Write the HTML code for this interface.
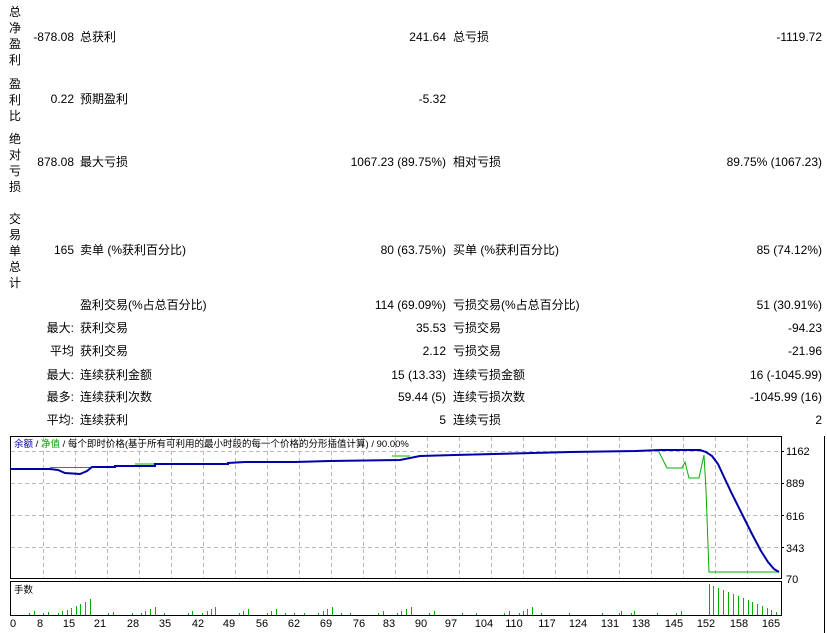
<!DOCTYPE html>
<html><head><meta charset="utf-8"><style>
body{margin:0;width:827px;height:633px;background:#fff;overflow:hidden;font-family:"Liberation Sans","Noto Sans CJK SC",sans-serif;font-size:12px;color:#000;position:relative}
.t{position:absolute;white-space:nowrap;line-height:14px}
.v{position:absolute;left:8px;width:14px;line-height:16px;font-size:12px;text-align:center}
.r{text-align:right}
</style></head><body>
<div class="v" style="top:4px">总<br>净<br>盈<br>利</div>
<div class="v" style="top:76px">盈<br>利<br>比</div>
<div class="v" style="top:131px">绝<br>对<br>亏<br>损</div>
<div class="v" style="top:211px">交<br>易<br>单<br>总<br>计</div>

<div class="t r" style="left:0;width:74px;top:30px">-878.08</div>
<div class="t" style="left:80px;top:30px">总获利</div>
<div class="t r" style="left:300px;width:146px;top:30px">241.64</div>
<div class="t" style="left:453px;top:30px">总亏损</div>
<div class="t r" style="left:600px;width:222px;top:30px">-1119.72</div>

<div class="t r" style="left:0;width:74px;top:92px">0.22</div>
<div class="t" style="left:80px;top:92px">预期盈利</div>
<div class="t r" style="left:300px;width:146px;top:92px">-5.32</div>

<div class="t r" style="left:0;width:74px;top:155px">878.08</div>
<div class="t" style="left:80px;top:155px">最大亏损</div>
<div class="t r" style="left:300px;width:146px;top:155px">1067.23 (89.75%)</div>
<div class="t" style="left:453px;top:155px">相对亏损</div>
<div class="t r" style="left:600px;width:222px;top:155px">89.75% (1067.23)</div>

<div class="t r" style="left:0;width:74px;top:243px">165</div>
<div class="t" style="left:80px;top:243px">卖单 (%获利百分比)</div>
<div class="t r" style="left:300px;width:146px;top:243px">80 (63.75%)</div>
<div class="t" style="left:453px;top:243px">买单 (%获利百分比)</div>
<div class="t r" style="left:600px;width:222px;top:243px">85 (74.12%)</div>

<div class="t" style="left:80px;top:298px">盈利交易(%占总百分比)</div>
<div class="t r" style="left:300px;width:146px;top:298px">114 (69.09%)</div>
<div class="t" style="left:453px;top:298px">亏损交易(%占总百分比)</div>
<div class="t r" style="left:600px;width:222px;top:298px">51 (30.91%)</div>

<div class="t r" style="left:0;width:74px;top:321px">最大:</div>
<div class="t" style="left:80px;top:321px">获利交易</div>
<div class="t r" style="left:300px;width:146px;top:321px">35.53</div>
<div class="t" style="left:453px;top:321px">亏损交易</div>
<div class="t r" style="left:600px;width:222px;top:321px">-94.23</div>

<div class="t r" style="left:0;width:74px;top:344px">平均</div>
<div class="t" style="left:80px;top:344px">获利交易</div>
<div class="t r" style="left:300px;width:146px;top:344px">2.12</div>
<div class="t" style="left:453px;top:344px">亏损交易</div>
<div class="t r" style="left:600px;width:222px;top:344px">-21.96</div>

<div class="t r" style="left:0;width:74px;top:368px">最大:</div>
<div class="t" style="left:80px;top:368px">连续获利金额</div>
<div class="t r" style="left:300px;width:146px;top:368px">15 (13.33)</div>
<div class="t" style="left:453px;top:368px">连续亏损金额</div>
<div class="t r" style="left:600px;width:222px;top:368px">16 (-1045.99)</div>

<div class="t r" style="left:0;width:74px;top:390px">最多:</div>
<div class="t" style="left:80px;top:390px">连续获利次数</div>
<div class="t r" style="left:300px;width:146px;top:390px">59.44 (5)</div>
<div class="t" style="left:453px;top:390px">连续亏损次数</div>
<div class="t r" style="left:600px;width:222px;top:390px">-1045.99 (16)</div>

<div class="t r" style="left:0;width:74px;top:413px">平均:</div>
<div class="t" style="left:80px;top:413px">连续获利</div>
<div class="t r" style="left:300px;width:146px;top:413px">5</div>
<div class="t" style="left:453px;top:413px">连续亏损</div>
<div class="t r" style="left:600px;width:222px;top:413px">2</div>

<svg style="position:absolute;left:0;top:0" width="827" height="633" xmlns="http://www.w3.org/2000/svg" font-family="Liberation Sans, Noto Sans CJK SC, sans-serif" font-size="11">
<g stroke="#b8b8b8" stroke-dasharray="4,3" stroke-width="1">
<line x1="11" y1="451.5" x2="781" y2="451.5"/><line x1="11" y1="483.5" x2="781" y2="483.5"/><line x1="11" y1="515.5" x2="781" y2="515.5"/><line x1="11" y1="547.5" x2="781" y2="547.5"/>
<line x1="43.5" y1="437" x2="43.5" y2="578"/><line x1="75.5" y1="437" x2="75.5" y2="578"/><line x1="107.5" y1="437" x2="107.5" y2="578"/><line x1="139.5" y1="437" x2="139.5" y2="578"/><line x1="171.5" y1="437" x2="171.5" y2="578"/><line x1="203.5" y1="437" x2="203.5" y2="578"/><line x1="235.5" y1="437" x2="235.5" y2="578"/><line x1="267.5" y1="437" x2="267.5" y2="578"/><line x1="299.5" y1="437" x2="299.5" y2="578"/><line x1="331.5" y1="437" x2="331.5" y2="578"/><line x1="363.5" y1="437" x2="363.5" y2="578"/><line x1="395.5" y1="437" x2="395.5" y2="578"/><line x1="427.5" y1="437" x2="427.5" y2="578"/><line x1="459.5" y1="437" x2="459.5" y2="578"/><line x1="491.5" y1="437" x2="491.5" y2="578"/><line x1="523.5" y1="437" x2="523.5" y2="578"/><line x1="555.5" y1="437" x2="555.5" y2="578"/><line x1="587.5" y1="437" x2="587.5" y2="578"/><line x1="619.5" y1="437" x2="619.5" y2="578"/><line x1="651.5" y1="437" x2="651.5" y2="578"/><line x1="683.5" y1="437" x2="683.5" y2="578"/><line x1="715.5" y1="437" x2="715.5" y2="578"/><line x1="747.5" y1="437" x2="747.5" y2="578"/>
</g>
<rect x="10.5" y="436.5" width="771" height="142" fill="none" stroke="#000"/>
<rect x="10.5" y="581.5" width="771" height="34" fill="none" stroke="#000"/>
<line x1="824.5" y1="436" x2="824.5" y2="633" stroke="#000"/>
<text x="14" y="447" font-size="9.5"><tspan fill="#0000a0">余额</tspan> / <tspan fill="#00a000">净值</tspan> / 每个即时价格(基于所有可利用的最小时段的每一个价格的分形插值计算) / 90.00%</text>
<text x="14" y="593" font-size="9.5">手数</text>
<line x1="50" y1="467.5" x2="90" y2="467.5" stroke="#00b000"/>
<polyline fill="none" stroke="#00b000" stroke-width="1" points="658,450 667,468 682,468 685,462 689,478 699,478 704,455 706,490 709,572 779,572"/>
<line x1="135" y1="464" x2="155" y2="464" stroke="#00b000"/><line x1="392" y1="456" x2="410" y2="456" stroke="#00b000"/><line x1="512" y1="453" x2="527" y2="453" stroke="#00b000"/>
<polyline fill="none" stroke="#0000a8" stroke-width="2" points="10,469 50,469 58,470 65,473 80,474 87,471 92,467 115,467 115,466 155,466 155,464 228,464 228,463 245,462 295,462 330,461 400,460 420,456 455,455 533,453 570,452 636,451 660,450 700,450 706,452 712,456 718,464 724,477 732,494 742,514 752,534 761,551 768,562 774,569 779,572"/>
<g font-size="11" fill="#000">
<text x="786" y="455">1162</text><text x="786" y="487">889</text><text x="786" y="520">616</text><text x="786" y="552">343</text><text x="786" y="583">70</text>
</g>
<g stroke="#000"><line x1="781" y1="451.5" x2="784" y2="451.5"/><line x1="781" y1="483.5" x2="784" y2="483.5"/><line x1="781" y1="515.5" x2="784" y2="515.5"/><line x1="781" y1="547.5" x2="784" y2="547.5"/></g>
<g font-size="11" text-anchor="middle">
<text x="13" y="627">0</text><text x="40" y="627">8</text><text x="69" y="627">15</text><text x="100" y="627">21</text><text x="133" y="627">28</text><text x="165" y="627">35</text><text x="198" y="627">42</text><text x="229" y="627">49</text><text x="262" y="627">56</text><text x="294" y="627">62</text><text x="326" y="627">69</text><text x="359" y="627">76</text><text x="389" y="627">83</text><text x="421" y="627">90</text><text x="451" y="627">97</text><text x="484" y="627">104</text><text x="514" y="627">110</text><text x="547" y="627">117</text><text x="578" y="627">124</text><text x="610" y="627">131</text><text x="641" y="627">138</text><text x="674" y="627">145</text><text x="706" y="627">152</text><text x="739" y="627">158</text><text x="771" y="627">165</text>
</g>
<g stroke="#00b000" stroke-width="1">
<path d="M29.5 615v-2M34.5 615v-4M43.5 615v-2M48.5 615v-3M58.5 615v-2M62.5 615v-4M67.5 615v-5M71.5 615v-7M76.5 615v-9M80.5 615v-11M85.5 615v-13M90.5 615v-16M108.5 615v-2M113.5 615v-3M132.5 615v-2M141.5 615v-2M145.5 615v-4M150.5 615v-6M155.5 615v-8M164.5 615v-2M188.5 615v-2M192.5 615v-4M202.5 615v-2M207.5 615v-4M211.5 615v-6M215.5 615v-8M239.5 615v-2M243.5 615v-4M248.5 615v-6M267.5 615v-2M271.5 615v-4M276.5 615v-6M285.5 615v-2M294.5 615v-2M304.5 615v-2M318.5 615v-2M323.5 615v-4M327.5 615v-6M332.5 615v-8M341.5 615v-2M350.5 615v-2M378.5 615v-2M383.5 615v-4M397.5 615v-2M401.5 615v-4M406.5 615v-6M411.5 615v-8M429.5 615v-2M434.5 615v-4M462.5 615v-2M476.5 615v-2M504.5 615v-2M509.5 615v-4M519.5 615v-2M523.5 615v-4M527.5 615v-6M532.5 615v-8M541.5 615v-2M569.5 615v-2M602.5 615v-2M619.5 615v-2M621.5 615v-4M631.5 615v-2M634.5 615v-4M657.5 615v-2M676.5 615v-2M681.5 615v-4M709.5 615v-31M713.5 615v-29M718.5 615v-27M723.5 615v-25M728.5 615v-23M733.5 615v-21M738.5 615v-19M743.5 615v-17M748.5 615v-15M752.5 615v-13M757.5 615v-11M762.5 615v-9M767.5 615v-7M771.5 615v-5M776.5 615v-3"/>
</g>
</svg>
</body></html>
